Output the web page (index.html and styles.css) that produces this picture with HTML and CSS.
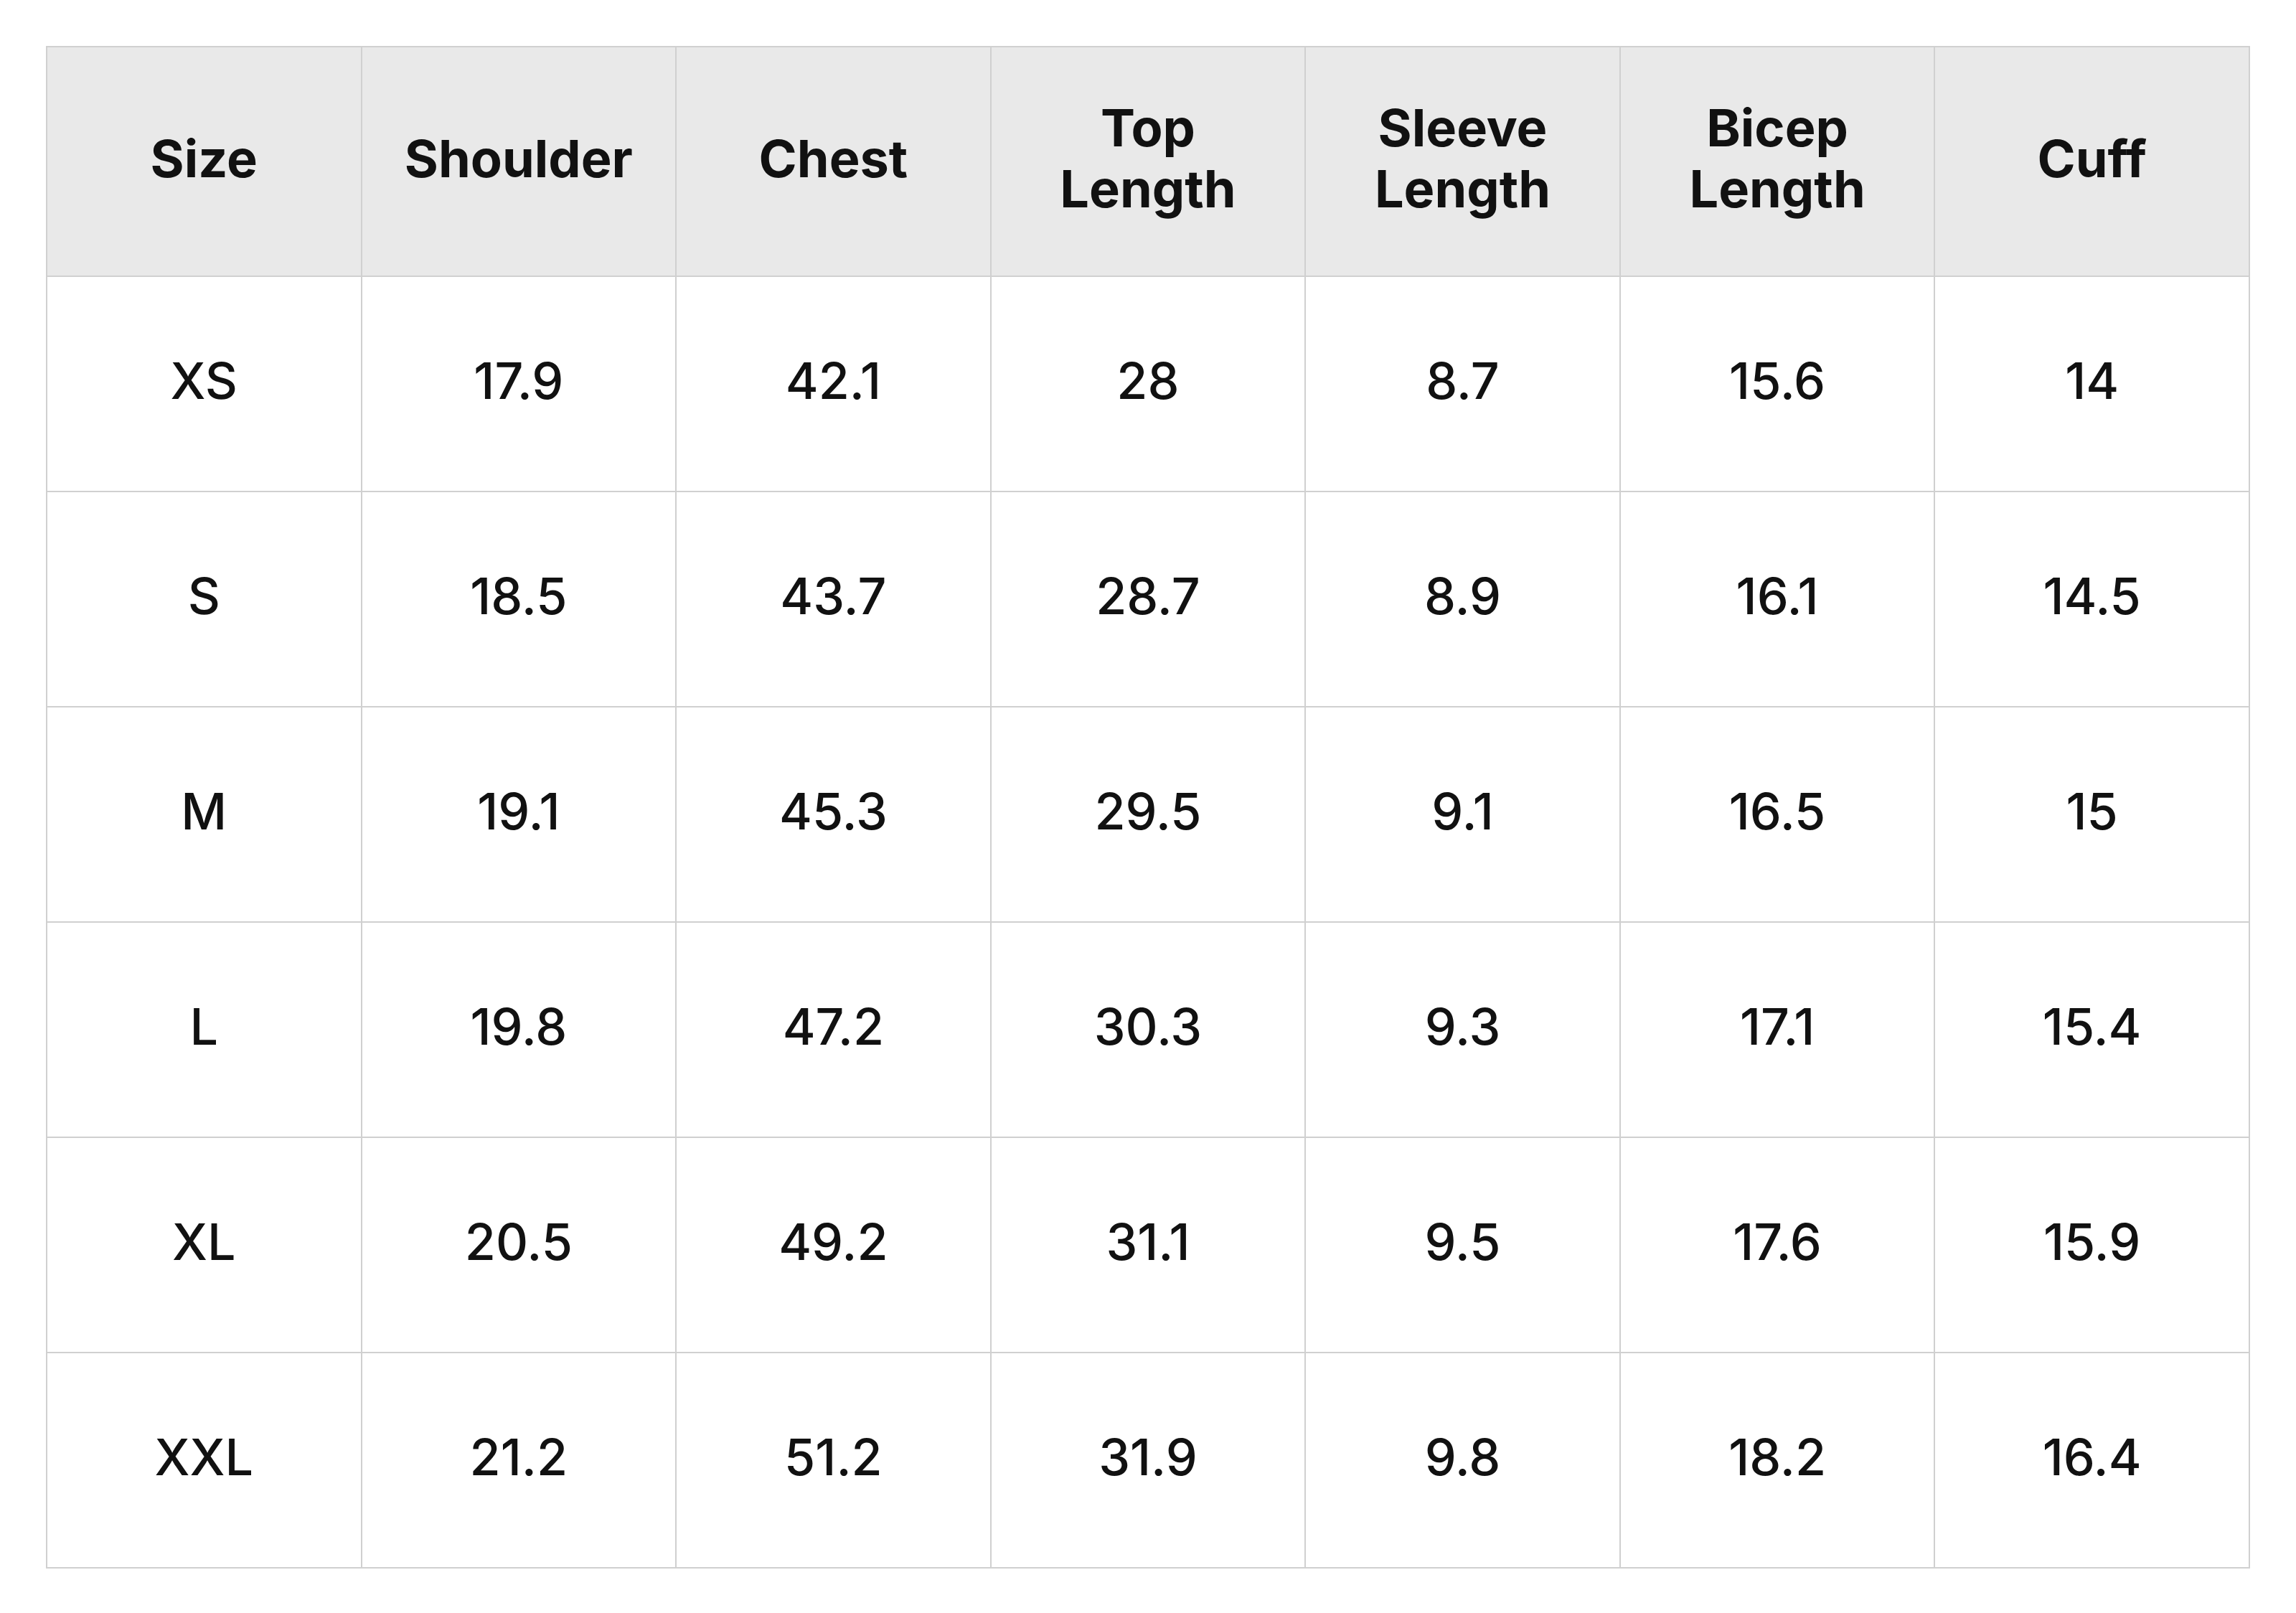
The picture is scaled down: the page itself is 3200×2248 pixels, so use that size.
FILE: index.html
```html
<!DOCTYPE html>
<html lang="en">
<head>
<meta charset="utf-8">
<title>Size Chart</title>
<link rel="stylesheet" href="styles.css">
</head>
<body>
<table class="size-table">
  <thead>
    <tr>
      <th>Size</th>
      <th>Shoulder</th>
      <th>Chest</th>
      <th>Top<br>Length</th>
      <th>Sleeve<br>Length</th>
      <th>Bicep<br>Length</th>
      <th>Cuff</th>
    </tr>
  </thead>
  <tbody>
    <tr><td>XS</td><td>17.9</td><td>42.1</td><td>28</td><td>8.7</td><td>15.6</td><td>14</td></tr>
    <tr><td>S</td><td>18.5</td><td>43.7</td><td>28.7</td><td>8.9</td><td>16.1</td><td>14.5</td></tr>
    <tr><td>M</td><td>19.1</td><td>45.3</td><td>29.5</td><td>9.1</td><td>16.5</td><td>15</td></tr>
    <tr><td>L</td><td>19.8</td><td>47.2</td><td>30.3</td><td>9.3</td><td>17.1</td><td>15.4</td></tr>
    <tr><td>XL</td><td>20.5</td><td>49.2</td><td>31.1</td><td>9.5</td><td>17.6</td><td>15.9</td></tr>
    <tr><td>XXL</td><td>21.2</td><td>51.2</td><td>31.9</td><td>9.8</td><td>18.2</td><td>16.4</td></tr>
  </tbody>
</table>
</body>
</html>
```
FILE: styles.css
```css
html, body {
  background: #ffffff;
}
body {
  margin: 64px;
  font-family: Inter, "Noto Sans", "Liberation Sans", sans-serif;
  color: #111111;
}
.size-table {
  width: 100%;
  border-collapse: collapse;
  table-layout: fixed;
}
.size-table th,
.size-table td {
  border: 2px solid #d0d0d0;
  text-align: center;
  vertical-align: middle;
  padding: 0 20px 10px;
}
.size-table th {
  background: #e9e9e9;
  font-weight: 700;
  font-size: 72px;
  line-height: 85px;
  height: 308px;
}
.size-table td {
  font-weight: 500;
  font-size: 70px;
  line-height: 85px;
  height: 288px;
}
```
